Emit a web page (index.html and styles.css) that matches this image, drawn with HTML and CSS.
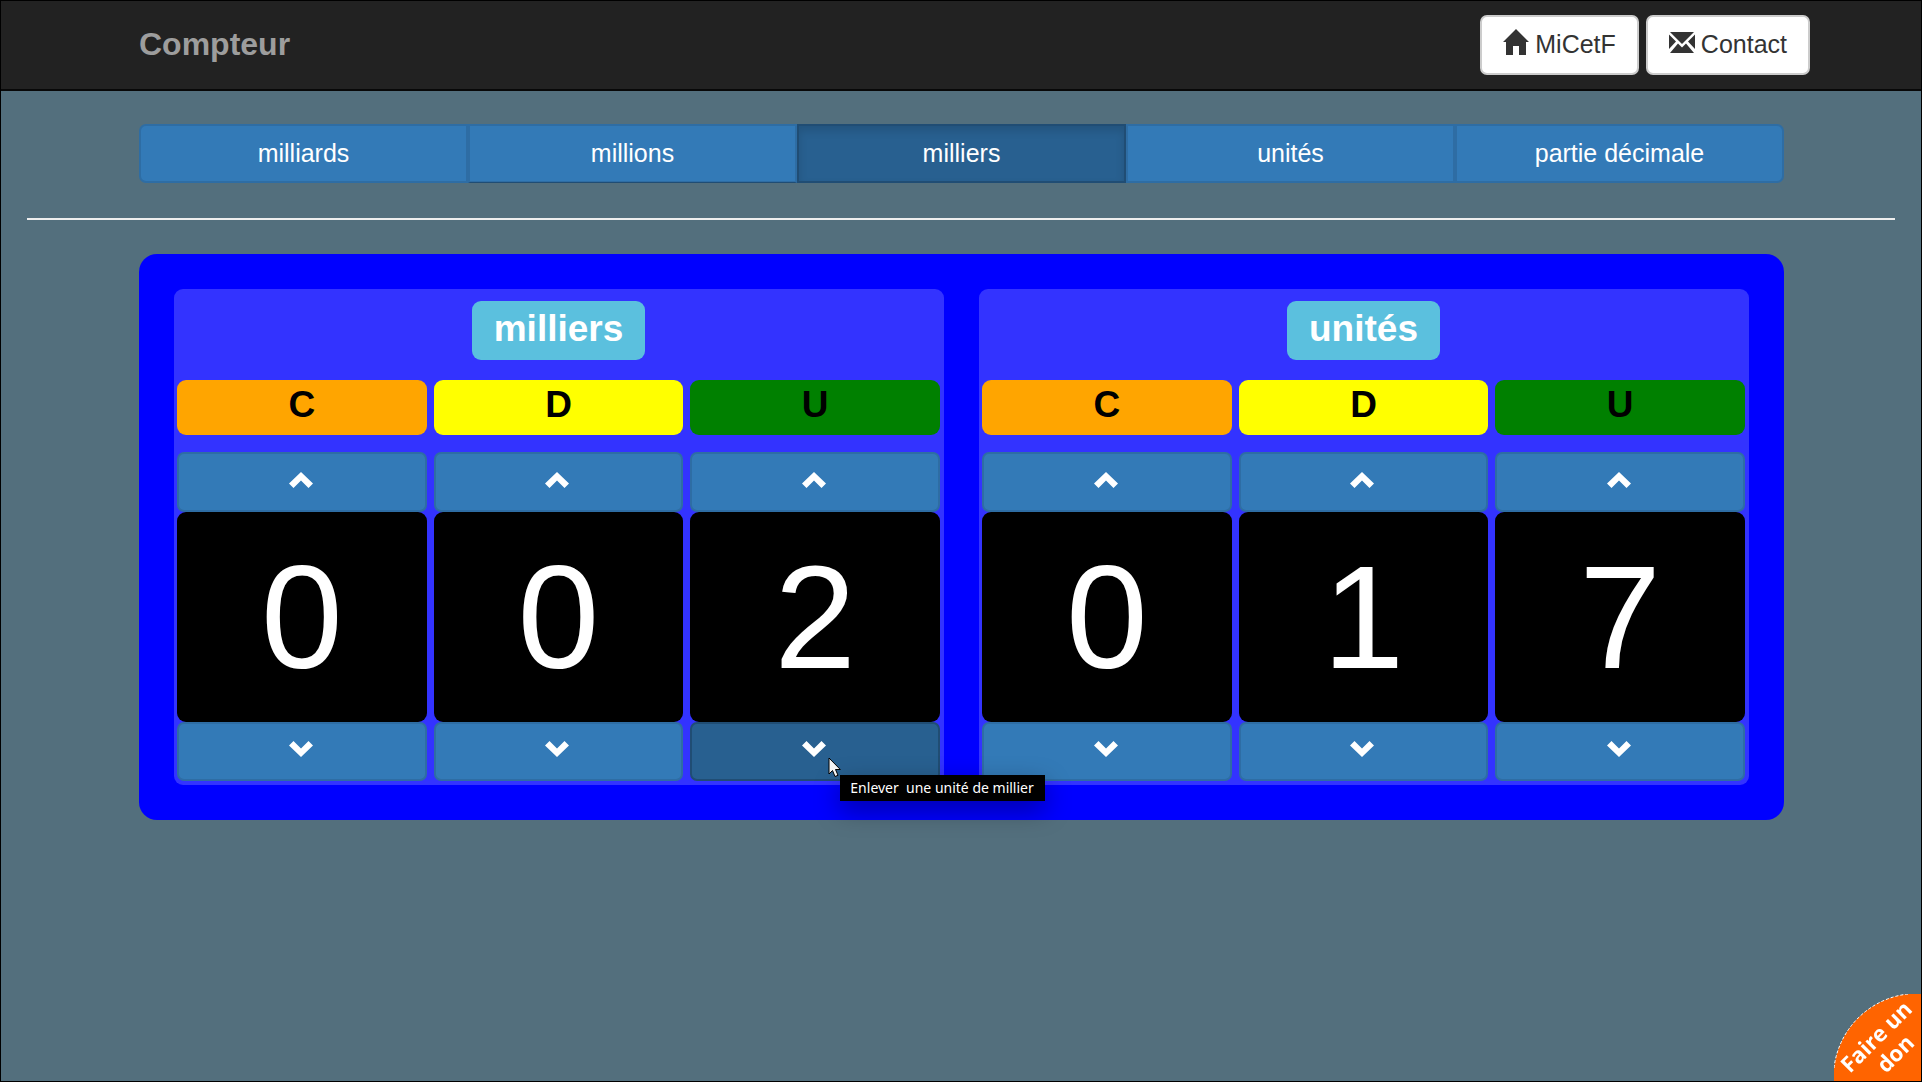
FILE: index.html
```html
<!DOCTYPE html>
<html lang="fr">
<head>
<meta charset="utf-8">
<title>Compteur</title>
<link rel="stylesheet" href="styles.css">
</head>
<body>
<svg class="symbols" aria-hidden="true">
  <symbol id="up" viewBox="0 0 24 16"><path d="M12 0 24 11.500 19.500 16 12 8.500 4.500 16 0 11.500Z"/></symbol>
  <symbol id="down" viewBox="0 0 24 16"><path d="M12 16 24 4.500 19.500 0 12 7.500 4.500 0 0 4.500Z"/></symbol>
</svg>
<header class="navbar">
  <h1 class="brand">Compteur</h1>
  <nav class="links">
    <a class="link" href="#"><svg class="icon" viewBox="0 0 26 26" aria-hidden="true"><path d="M13 0 26 13H23V26H16V17H10V26H3V13H0Z"/></svg>MiCetF</a>
    <a class="link" href="#"><svg class="icon" viewBox="0 0 26 26" aria-hidden="true"><path d="M1 3H25L13 15ZM0 5.500 7 12.500 0 20ZM26 5.500V20L19 12.500ZM1 24 9 14.500 13 18.500 17 14.500 25 24Z"/></svg>Contact</a>
  </nav>
</header>
<main>
  <div class="tabs">
    <button class="tab">milliards</button>
    <button class="tab before-active">millions</button>
    <button class="tab active">milliers</button>
    <button class="tab">unités</button>
    <button class="tab">partie décimale</button>
  </div>
  <hr class="rule">
  <div class="counter">
    <section class="period">
      <h2 class="name">milliers</h2>
      <div class="columns">
        <div class="column">
          <div class="rank hundreds">C</div>
          <button class="step" aria-label="Ajouter une centaine de millier"><svg class="chevron"><use href="#up"/></svg></button>
          <div class="digit">0</div>
          <button class="step" aria-label="Enlever une centaine de millier"><svg class="chevron"><use href="#down"/></svg></button>
        </div>
        <div class="column">
          <div class="rank tens">D</div>
          <button class="step" aria-label="Ajouter une dizaine de millier"><svg class="chevron"><use href="#up"/></svg></button>
          <div class="digit">0</div>
          <button class="step" aria-label="Enlever une dizaine de millier"><svg class="chevron"><use href="#down"/></svg></button>
        </div>
        <div class="column">
          <div class="rank ones">U</div>
          <button class="step" aria-label="Ajouter une unité de millier"><svg class="chevron"><use href="#up"/></svg></button>
          <div class="digit">2</div>
          <div class="hovered">
            <button class="step hover" aria-describedby="tip" aria-label="Enlever une unité de millier"><svg class="chevron"><use href="#down"/></svg></button>
            <svg class="cursor" viewBox="0 0 14 21" aria-hidden="true"><path d="M1 1V17L4.500 13.500 7 19.500 10 18.300 7.500 12.500H12.300Z"/></svg>
            <div class="tooltip" id="tip" role="tooltip">Enlever &nbsp;une unité de millier</div>
          </div>
        </div>
      </div>
    </section>
    <section class="period">
      <h2 class="name">unités</h2>
      <div class="columns">
        <div class="column">
          <div class="rank hundreds">C</div>
          <button class="step" aria-label="Ajouter une centaine"><svg class="chevron"><use href="#up"/></svg></button>
          <div class="digit">0</div>
          <button class="step" aria-label="Enlever une centaine"><svg class="chevron"><use href="#down"/></svg></button>
        </div>
        <div class="column">
          <div class="rank tens">D</div>
          <button class="step" aria-label="Ajouter une dizaine"><svg class="chevron"><use href="#up"/></svg></button>
          <div class="digit">1</div>
          <button class="step" aria-label="Enlever une dizaine"><svg class="chevron"><use href="#down"/></svg></button>
        </div>
        <div class="column">
          <div class="rank ones">U</div>
          <button class="step" aria-label="Ajouter une unité"><svg class="chevron"><use href="#up"/></svg></button>
          <div class="digit">7</div>
          <button class="step" aria-label="Enlever une unité"><svg class="chevron"><use href="#down"/></svg></button>
        </div>
      </div>
    </section>
  </div>
</main>
<a class="donate" href="#">
  <svg viewBox="0 0 87 87">
    <path class="disc" d="M0 87V74A84 84 0 0 1 74 0H87V87Z"/>
    <path class="edge" d="M0 74A84 84 0 0 1 74 0"/>
    <text class="donate-text" transform="translate(16 80) rotate(-45)">Faire un</text>
    <text class="donate-text" transform="translate(52 80) rotate(-45)">don</text>
  </svg>
</a>
</body>
</html>
```
FILE: styles.css
```css
* {
  box-sizing: border-box;
}

body {
  margin: 0;
  min-height: 100vh;
  border: 1px solid #000;
  background: #536f7d;
  font-family: "Liberation Sans", Arial, sans-serif;
  font-size: 25px;
  line-height: 35px;
}

button {
  margin: 0;
  font: inherit;
  color: #fff;
  cursor: pointer;
}

.symbols {
  display: none;
}

.navbar {
  display: flex;
  align-items: center;
  justify-content: space-between;
  padding: 14px 111px 14px 138px;
  border-bottom: 2px solid #080808;
  background: #222;
}

.brand {
  margin: 0;
  padding-bottom: 2px;
  color: #9d9d9d;
  font-size: 32px;
}

.links {
  display: flex;
  gap: 7px;
}

.link {
  display: flex;
  align-items: center;
  gap: 6px;
  height: 60px;
  padding: 0 21px 2px;
  border: 2px solid #ccc;
  border-radius: 7px;
  background: #fff;
  color: #333;
  text-decoration: none;
}

.icon {
  width: 26px;
  height: 26px;
  margin-bottom: 4px;
  fill: #333;
}

.tabs {
  display: flex;
  margin: 33px 137px 0 138px;
}

.tab {
  flex: 1;
  height: 59px;
  padding: 0;
  border: 2px solid #2e6da4;
  background: #337ab7;
}

.tab:first-child {
  border-radius: 7px 0 0 7px;
}

.tab:last-child {
  border-radius: 0 7px 7px 0;
}

.tab.before-active {
  padding-bottom: 1px;
  box-shadow: inset 0 -1px #2e6da4;
  border-bottom: 1px solid #204d74;
}

.tab.active {
  border-color: #204d74;
  background: #286090;
  box-shadow: inset 0 5px 9px rgba(0, 0, 0, 0.125);
}

.rule {
  margin: 35px 26px 34px;
  border: 0;
  border-top: 2px solid #eee;
}

.counter {
  display: grid;
  grid-template-columns: 1fr 1fr;
  gap: 35px;
  margin: 0 137px 0 138px;
  padding: 35px;
  border-radius: 18px;
  background: #00f;
}

.period {
  display: flex;
  flex-direction: column;
  align-items: center;
  padding: 12px 4px 4px 3px;
  border-radius: 9px;
  background: #33f;
}

.name {
  margin: 0 0 20px;
  padding: 8px 22px 12px;
  border-radius: 9px;
  background: #5bc0de;
  color: #fff;
  font-size: 37px;
  line-height: 39px;
}

.columns {
  display: grid;
  grid-template-columns: repeat(3, 1fr);
  gap: 7px;
  width: 100%;
}

.column {
  display: flex;
  flex-direction: column;
}

.rank {
  height: 55px;
  margin-bottom: 17px;
  border-radius: 9px;
  color: #000;
  font-size: 37px;
  font-weight: bold;
  line-height: 49px;
  text-align: center;
}

.hundreds {
  background: orange;
}

.tens {
  background: yellow;
}

.ones {
  background: green;
}

.step {
  display: flex;
  align-items: center;
  justify-content: center;
  width: 100%;
  height: 60px;
  padding: 0 2px 4px 0;
  border: 2px solid #2e6da4;
  border-radius: 7px;
  background: #337ab7;
}

.digit + .step,
.step.hover {
  height: 59px;
  padding-bottom: 5px;
}

.step.hover {
  border-color: #204d74;
  background: #286090;
}

.chevron {
  width: 24px;
  height: 16px;
  fill: #fff;
}

.digit {
  height: 210px;
  border-radius: 9px;
  background: #000;
  color: #fff;
  font-size: 147px;
  line-height: 210px;
  text-align: center;
}

.hovered {
  position: relative;
}

.cursor {
  position: absolute;
  top: 35px;
  left: 138px;
  z-index: 2;
  width: 14px;
  height: 21px;
  fill: #f4f4f4;
  stroke: #000;
}

.tooltip {
  position: absolute;
  top: 53px;
  left: 150px;
  z-index: 1;
  padding: 0 11px 0 10px;
  background: #000;
  color: #fff;
  font-family: "Noto Sans", sans-serif;
  font-size: 14px;
  line-height: 26px;
  white-space: nowrap;
  box-shadow: 0 9px 26px rgba(0, 0, 0, 0.35);
}

.donate {
  position: fixed;
  right: 1px;
  bottom: 1px;
  width: 87px;
  height: 87px;
}

.donate svg {
  display: block;
}

.disc {
  fill: #ff6400;
}

.edge {
  fill: none;
  stroke: #fff;
  stroke-dasharray: 3 2;
}

.donate-text {
  fill: #fff;
  font-family: "Open Sans", sans-serif;
  font-size: 22px;
  font-weight: bold;
}
```
